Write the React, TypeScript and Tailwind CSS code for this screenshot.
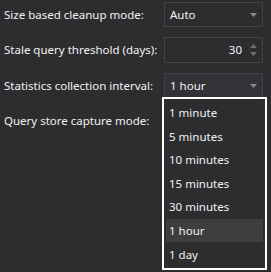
import React from "react";

const font = { fontFamily: '"Segoe UI", "Noto Sans", "Open Sans", sans-serif' };

function Arrow() {
  return (
    <svg width="7" height="4" viewBox="0 0 7 4" className="shrink-0">
      <path d="M0 0h7L3.5 4z" fill="#8a8a8d" />
    </svg>
  );
}

function Spin() {
  return (
    <svg width="7" height="12" viewBox="0 0 7 12" className="shrink-0">
      <path d="M0 4L3.5 0L7 4z" fill="#6f6f72" />
      <path d="M0 8h7L3.5 12z" fill="#6f6f72" />
    </svg>
  );
}

export default function App() {
  const items = ["1 minute", "5 minutes", "10 minutes", "15 minutes", "30 minutes", "1 hour", "1 day"];
  return (
    <div className="relative w-[271px] h-[272px] bg-[#2d2d30] text-[#f1f1f1] text-[11.5px] overflow-hidden whitespace-nowrap" style={font}>
      <div className="flex flex-col pt-[2px]">
        <div className="flex items-center h-[25px] mb-[10px]">
          <div className="w-[164px] pl-[4px]">Size based cleanup mode:</div>
          <div className="flex items-center w-[99px] h-[25px] border border-[#434346] pl-[5px] pr-[5px]">
            <span className="flex-1">Auto</span>
            <Arrow />
          </div>
        </div>
        <div className="flex items-center h-[26px] mb-[10px]">
          <div className="w-[164px] pl-[4px]">Stale query threshold (days):</div>
          <div className="flex items-center w-[99px] h-[26px] border border-[#434346] pl-[5px] pr-[5px]">
            <span className="flex-1 text-right pr-[8px]">30</span>
            <Spin />
          </div>
        </div>
        <div className="flex items-center h-[25px] mb-[10px]">
          <div className="w-[164px] pl-[4px]">Statistics collection interval:</div>
          <div className="flex items-center w-[99px] h-[25px] border border-[#434346] bg-[#333337] pl-[5px] pr-[5px]">
            <span className="flex-1">1 hour</span>
            <Arrow />
          </div>
        </div>
        <div className="flex items-center h-[25px]">
          <div className="w-[164px] pl-[4px]">Query store capture mode:</div>
        </div>
      </div>
      <div className="absolute left-[162px] top-[97px] w-[105px] h-[173px] border-2 border-white bg-[#2d2d30] p-[2px] flex flex-col">
        {items.map((it) => (
          <div
            key={it}
            className={"h-[24px] flex items-center pl-[3px] " + (it === "1 hour" ? "bg-[#3e3e40]" : "")}
          >
            {it}
          </div>
        ))}
      </div>
    </div>
  );
}
